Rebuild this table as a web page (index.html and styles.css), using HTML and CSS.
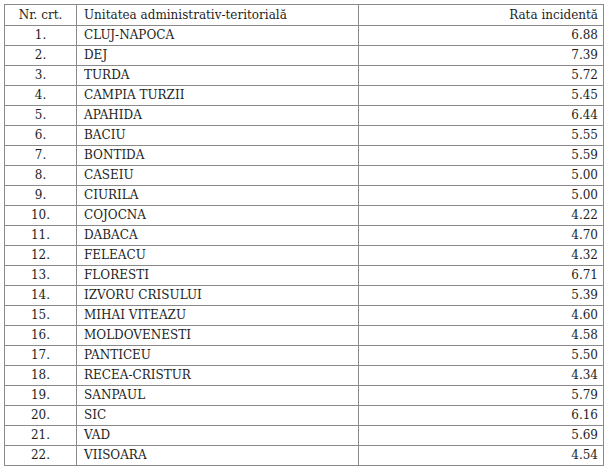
FILE: index.html
```html
<!DOCTYPE html>
<html lang="ro">
<head>
<meta charset="utf-8">
<title>Rata incidenta</title>
<link rel="stylesheet" href="styles.css">
</head>
<body>
<table class="rates">
  <thead>
    <tr><th class="c-nr">Nr. crt.</th><th class="c-name">Unitatea administrativ-teritorială</th><th class="c-rate">Rata incidentă</th></tr>
  </thead>
  <tbody>
    <tr><td class="c-nr">1.</td><td class="c-name">CLUJ-NAPOCA</td><td class="c-rate">6.88</td></tr>
    <tr><td class="c-nr">2.</td><td class="c-name">DEJ</td><td class="c-rate">7.39</td></tr>
    <tr><td class="c-nr">3.</td><td class="c-name">TURDA</td><td class="c-rate">5.72</td></tr>
    <tr><td class="c-nr">4.</td><td class="c-name">CAMPIA TURZII</td><td class="c-rate">5.45</td></tr>
    <tr><td class="c-nr">5.</td><td class="c-name">APAHIDA</td><td class="c-rate">6.44</td></tr>
    <tr><td class="c-nr">6.</td><td class="c-name">BACIU</td><td class="c-rate">5.55</td></tr>
    <tr><td class="c-nr">7.</td><td class="c-name">BONTIDA</td><td class="c-rate">5.59</td></tr>
    <tr><td class="c-nr">8.</td><td class="c-name">CASEIU</td><td class="c-rate">5.00</td></tr>
    <tr><td class="c-nr">9.</td><td class="c-name">CIURILA</td><td class="c-rate">5.00</td></tr>
    <tr><td class="c-nr">10.</td><td class="c-name">COJOCNA</td><td class="c-rate">4.22</td></tr>
    <tr><td class="c-nr">11.</td><td class="c-name">DABACA</td><td class="c-rate">4.70</td></tr>
    <tr><td class="c-nr">12.</td><td class="c-name">FELEACU</td><td class="c-rate">4.32</td></tr>
    <tr><td class="c-nr">13.</td><td class="c-name">FLORESTI</td><td class="c-rate">6.71</td></tr>
    <tr><td class="c-nr">14.</td><td class="c-name">IZVORU CRISULUI</td><td class="c-rate">5.39</td></tr>
    <tr><td class="c-nr">15.</td><td class="c-name">MIHAI VITEAZU</td><td class="c-rate">4.60</td></tr>
    <tr><td class="c-nr">16.</td><td class="c-name">MOLDOVENESTI</td><td class="c-rate">4.58</td></tr>
    <tr><td class="c-nr">17.</td><td class="c-name">PANTICEU</td><td class="c-rate">5.50</td></tr>
    <tr><td class="c-nr">18.</td><td class="c-name">RECEA-CRISTUR</td><td class="c-rate">4.34</td></tr>
    <tr><td class="c-nr">19.</td><td class="c-name">SANPAUL</td><td class="c-rate">5.79</td></tr>
    <tr><td class="c-nr">20.</td><td class="c-name">SIC</td><td class="c-rate">6.16</td></tr>
    <tr><td class="c-nr">21.</td><td class="c-name">VAD</td><td class="c-rate">5.69</td></tr>
    <tr><td class="c-nr">22.</td><td class="c-name">VIISOARA</td><td class="c-rate">4.54</td></tr>
  </tbody>
</table>
</body>
</html>
```
FILE: styles.css
```css
html, body {
  margin: 0;
  padding: 0;
  background: #ffffff;
}
body {
  padding: 4px 0 0 4px;
  font-family: "DejaVu Serif", "Liberation Serif", serif;
  color: #1e1e1e;
}
.rates {
  border-collapse: collapse;
  width: 600px;
  table-layout: fixed;
  font-size: 12px;
}
.rates th, .rates td {
  border: 1px solid #8a8a8a;
  font-weight: normal;
  height: 19px;
  padding: 0 5px 0 7px;
  line-height: 19px;
  white-space: nowrap;
  overflow: hidden;
}
.rates thead th {
  height: 20px;
}
.c-nr {
  width: 71px;
  text-align: center;
}
th.c-nr, td.c-nr {
  padding: 0;
}
.c-name {
  width: 269px;
  text-align: left;
}
.c-rate {
  text-align: right;
}
```
